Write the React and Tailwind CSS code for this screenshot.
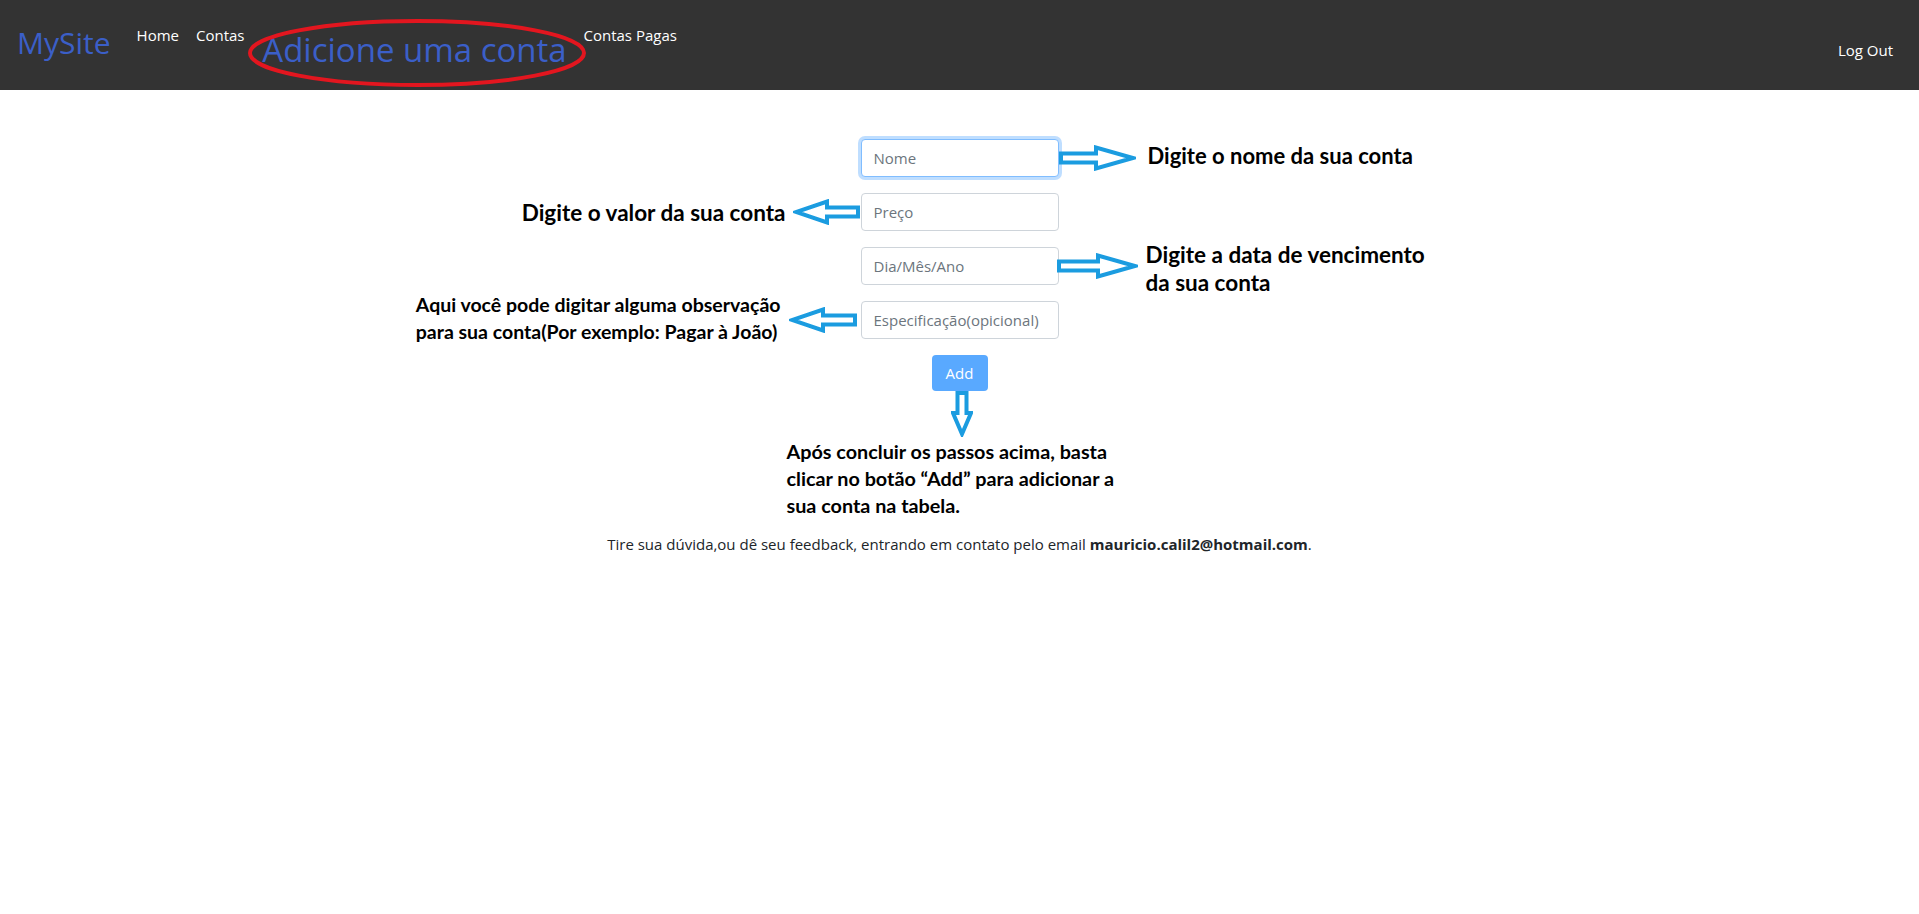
import React from 'react'

// hollow callout arrow, points right unless flipped
const Arrow = ({ w = 76, h = 26, head = 40, className = '' }) => {
  const c = h / 2
  const sx = w - head
  const d = `M2 ${c - 4.5} L${sx} ${c - 4.5} L${sx} ${c - 10.5} L${w - 3} ${c} L${sx} ${c + 10.5} L${sx} ${c + 4.5} L2 ${c + 4.5} Z`
  return (
    <svg width={w} height={h} viewBox={`0 0 ${w} ${h}`} className={`shrink-0 ${className}`}>
      <path d={d} fill="white" stroke="#1b9ce0" strokeWidth="4" strokeLinejoin="miter" />
    </svg>
  )
}

const DownArrow = () => (
  <svg width="22" height="46" viewBox="0 0 22 46" className="block">
    <path d="M6.5 2 L15.5 2 L15.5 22 L20 22 L11 43 L2 22 L6.5 22 Z" fill="white" stroke="#1b9ce0" strokeWidth="4" />
  </svg>
)

const Note = ({ children, className = '' }) => (
  <div className={`font-['Lato',sans-serif] font-bold text-black whitespace-nowrap ${className}`}>{children}</div>
)

const Field = ({ placeholder, focused }) => (
  <input
    placeholder={placeholder}
    className={`w-[198px] h-[38px] rounded-[4px] border bg-white px-3 text-[15px] text-[#495057] placeholder:text-[#6c757d] outline-none ${
      focused ? 'border-[#80bdff] shadow-[0_0_0_3px_rgba(0,123,255,0.25)]' : 'border-[#ced4da]'
    }`}
  />
)

const App = () => {
  return (
    <div className="min-h-[914px] bg-white font-['Open_Sans',sans-serif] text-[#212529]">
      {/* Navbar */}
      <nav className="h-[90px] bg-[#333333] flex items-center pl-[17px] pr-[26px]">
        <a className="text-[30px] leading-none text-[#3b5fc8] mt-[-4px]">MySite</a>
        <ul className="flex self-start mt-[24px] ml-[26px] gap-[17px] text-[15px] text-white">
          <li>Home</li>
          <li>Contas</li>
        </ul>
        <div className="relative ml-[3px] mt-[16px] w-[338px] h-[70px] flex items-center justify-center">
          <svg className="absolute inset-0" width="338" height="70" viewBox="0 0 338 70">
            <ellipse cx="169" cy="35" rx="167" ry="32" fill="none" stroke="#e3161f" strokeWidth="4" />
          </svg>
          <span className="text-[33px] leading-none text-[#3b5fc8] mt-[-7px] mr-[4px]">Adicione uma conta</span>
        </div>
        <div className="self-start mt-[24px] -ml-[2px] text-[15px] text-white">Contas Pagas</div>
        <div className="ml-auto text-[15px] text-white mt-[10px]">Log Out</div>
      </nav>

      {/* Form */}
      <div className="pt-[49px] flex flex-col gap-[16px]">
        <div className="grid grid-cols-[1fr_198px_1fr] h-[38px] items-center">
          <div />
          <Field placeholder="Nome" focused />
          <div className="flex items-center h-[38px]">
            <Arrow w={77} head={40} />
            <Note className="text-[22px] ml-[12px] mt-[-6px]">Digite o nome da sua conta</Note>
          </div>
        </div>

        <div className="grid grid-cols-[1fr_198px_1fr] h-[38px] items-center">
          <div className="flex items-center justify-end h-[38px]">
            <Note className="text-[22.5px] mr-[7px] mt-[1px]">Digite o valor da sua conta</Note>
            <Arrow w={67} head={34} className="-scale-x-100 mr-[1px]" />
          </div>
          <Field placeholder="Preço" />
          <div />
        </div>

        <div className="grid grid-cols-[1fr_198px_1fr] h-[38px] items-center">
          <div />
          <Field placeholder="Dia/Mês/Ano" />
          <div className="flex items-center h-[38px]">
            <Arrow w={81} head={40} className="-ml-[2px]" />
            <Note className="text-[22.5px] leading-[28px] ml-[8px] mt-[6px]">
              Digite a data de vencimento
              <br />
              da sua conta
            </Note>
          </div>
        </div>

        <div className="grid grid-cols-[1fr_198px_1fr] h-[38px] items-center">
          <div className="flex items-center justify-end h-[38px]">
            <Note className="text-[19.5px] leading-[27px] mr-[8px] mt-[-5px]">
              Aqui você pode digitar alguma observação
              <br />
              para sua conta(Por exemplo: Pagar à João)
            </Note>
            <Arrow w={68} head={34} className="-scale-x-100 mr-[4px]" />
          </div>
          <Field placeholder="Especificação(opicional)" />
          <div />
        </div>

        <div className="flex flex-col items-center">
          <button className="w-[56px] h-[36px] rounded-[4px] bg-[#59a9ff] text-white text-[15px]">Add</button>
          <div className="ml-[5px]">
            <DownArrow />
          </div>
        </div>
      </div>

      <Note className="w-[346px] mx-auto text-[19.8px] leading-[27px] mt-[1px]">
        Após concluir os passos acima, basta
        <br />
        clicar no botão “Add” para adicionar a
        <br />
        sua conta na tabela.
      </Note>

      <p className="text-center text-[15px] mt-[14px]">
        Tire sua dúvida,ou dê seu feedback, entrando em contato pelo email{' '}
        <b className="font-bold">mauricio.calil2@hotmail.com</b>.
      </p>
    </div>
  )
}

export default App
